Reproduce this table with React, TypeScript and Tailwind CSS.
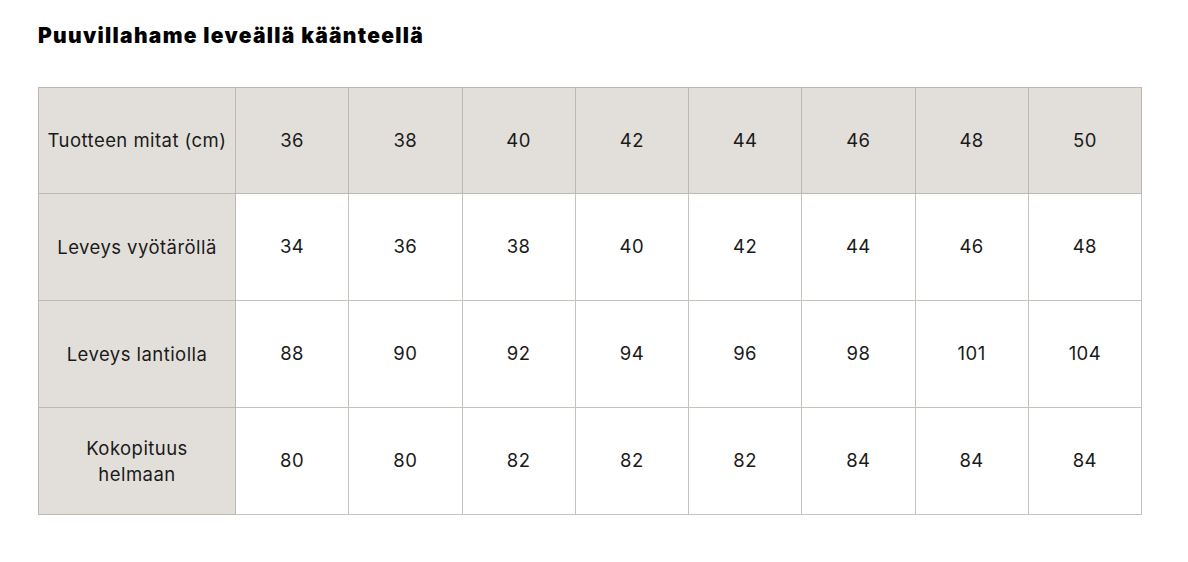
import React from 'react'

const sizes = ['36', '38', '40', '42', '44', '46', '48', '50']

const rows: { label: React.ReactNode; values: string[] }[] = [
  { label: 'Leveys vyötäröllä', values: ['34', '36', '38', '40', '42', '44', '46', '48'] },
  { label: 'Leveys lantiolla', values: ['88', '90', '92', '94', '96', '98', '101', '104'] },
  { label: <>Kokopituus<br />helmaan</>, values: ['80', '80', '82', '82', '82', '84', '84', '84'] },
]

export default function App() {
  return (
    <div className="min-h-[562px] w-[1188px] bg-white text-[#1a1a1a]" style={{ fontFamily: 'Inter, "Noto Sans", sans-serif' }}>
      <div className="pl-[38px] pt-[21px]">
        <h1 className="text-[21px] leading-[30px] font-black tracking-[1.3px] text-black">
          Puuvillahame leveällä käänteellä
        </h1>

        {/* Size table */}
        <table className="mt-[36px] w-[1104px] table-fixed border-collapse border border-[#a19c95] text-[18.5px] tracking-[0.45px]">
          <colgroup>
            <col className="w-[197px]" />
            {sizes.map(s => <col key={s} />)}
          </colgroup>
          <thead>
            <tr className="h-[106px] bg-[#e2dfda]">
              <th className="border border-[#bdb8b1] px-0 text-center font-normal">Tuotteen mitat (cm)</th>
              {sizes.map(s => (
                <th key={s} className="border border-[#bdb8b1] text-center font-normal">{s}</th>
              ))}
            </tr>
          </thead>
          <tbody>
            {rows.map((r, i) => (
              <tr key={i} className="h-[107px]">
                <td className="border border-[#bdb8b1] bg-[#e2dfda] px-2 text-center leading-[26px]">{r.label}</td>
                {r.values.map((v, j) => (
                  <td key={j} className="border border-[#c6c2bc] text-center">{v}</td>
                ))}
              </tr>
            ))}
          </tbody>
        </table>
      </div>
    </div>
  )
}
